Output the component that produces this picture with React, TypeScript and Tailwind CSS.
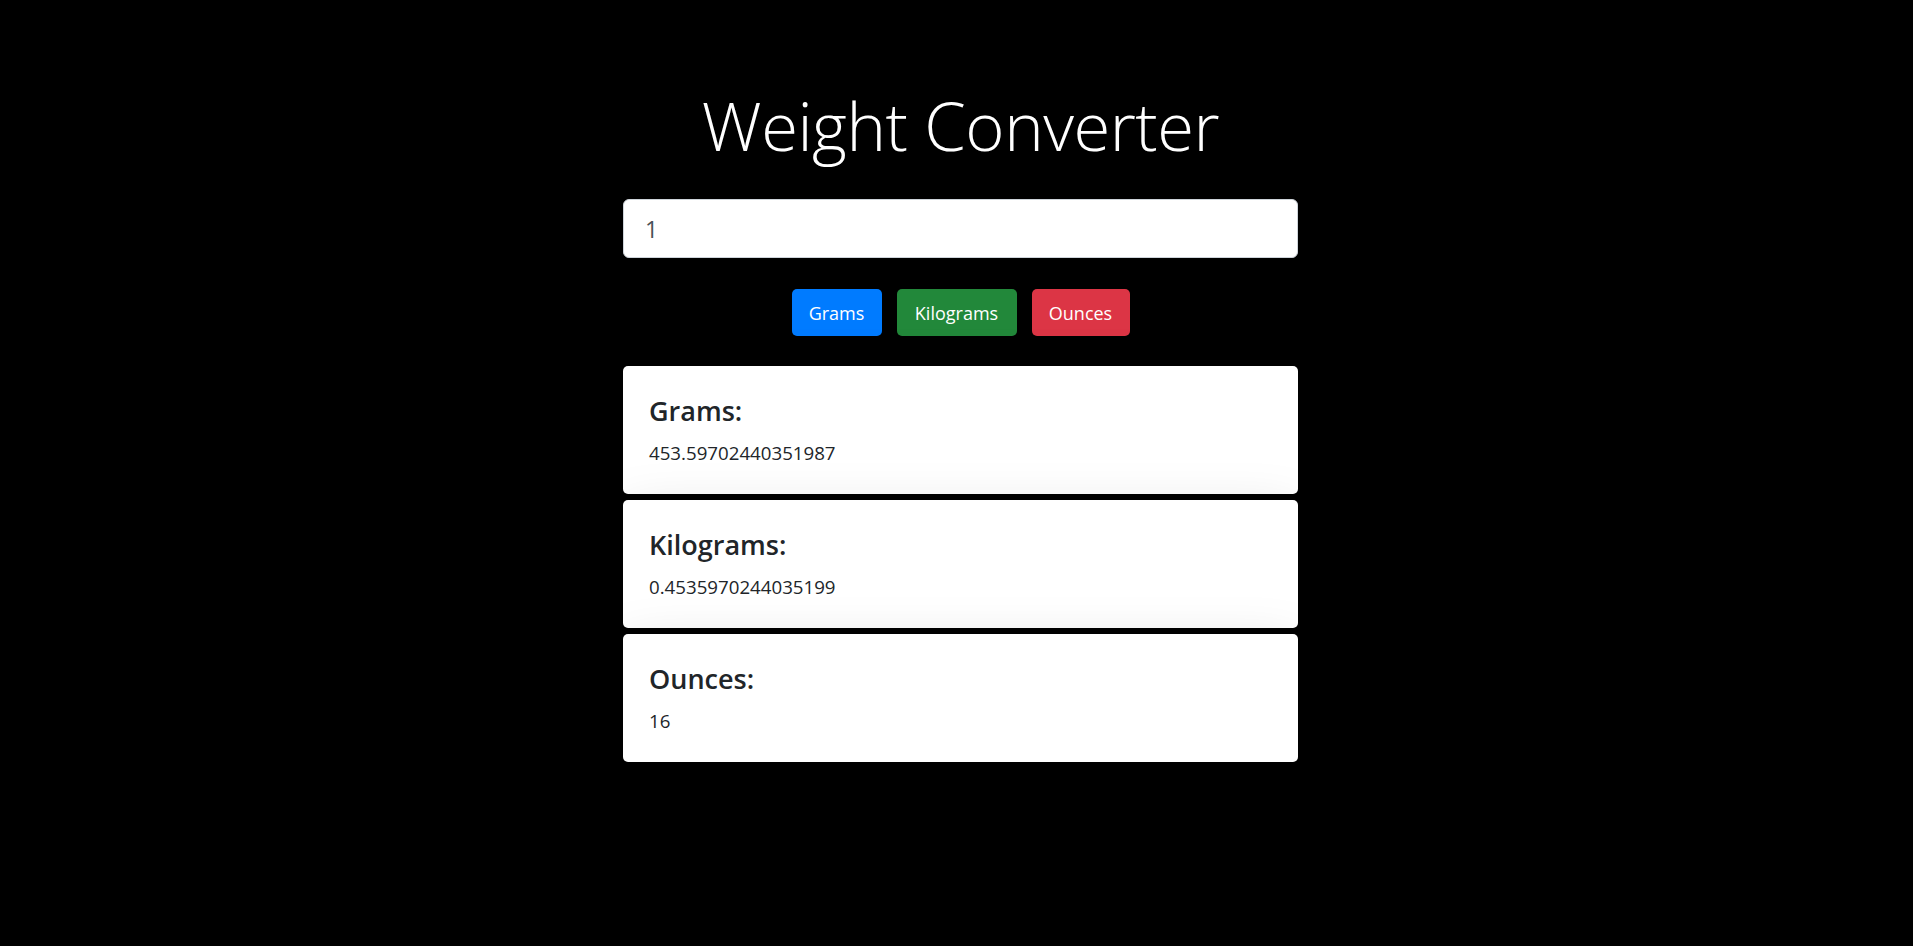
import React, { useState } from 'react';

const Converter: React.FC = () => {
  const [value, setValue] = useState('1');

  // input is in pounds
  const pounds = parseFloat(value) || 0;

  const results = [
    { label: 'Grams:', value: pounds * 453.59702440351987 },
    { label: 'Kilograms:', value: pounds * 0.4535970244035199 },
    { label: 'Ounces:', value: pounds * 16 },
  ];

  return (
    <div className="min-h-screen bg-black flex flex-col items-center pt-[92px] pl-[8px]" style={{ fontFamily: '"Open Sans", "Noto Sans", sans-serif' }}>
      {/* Title */}
      <h1 className="text-white text-[67px] leading-[67px] font-light tracking-[-0.5px]">Weight Converter</h1>

      {/* Input */}
      <input
        type="text"
        value={value}
        onChange={(e) => setValue(e.target.value)}
        className="mt-[40px] w-[675px] h-[59px] bg-white border border-[#ced4da] rounded-[6px] pl-[21px] text-[23px] text-[#495057] outline-none"
      />

      {/* Unit buttons */}
      <div className="mt-[31px] flex gap-[15px]">
        <UnitButton label="Grams" className="w-[90px] bg-[#007bff]" />
        <UnitButton label="Kilograms" className="w-[120px] bg-[#22883a]" />
        <UnitButton label="Ounces" className="w-[98px] bg-[#dc3545]" />
      </div>

      {/* Results */}
      <div className="mt-[30px] flex flex-col gap-[6px]">
        {results.map((r) => (
          <ResultCard key={r.label} title={r.label} value={String(r.value)} />
        ))}
      </div>
    </div>
  );
};

const UnitButton: React.FC<{ label: string; className: string }> = ({ label, className }) => (
  <button className={`h-[47px] rounded-[5px] text-white text-[18px] leading-none text-center ${className}`}>
    {label}
  </button>
);

const ResultCard: React.FC<{ title: string; value: string }> = ({ title, value }) => (
  <div className="w-[675px] h-[128px] bg-white rounded-[5px] pl-[26px] pt-[31px] shadow-[0_19px_58px_rgba(0,0,0,0.175)]">
    <h4 className="text-[27px] leading-[27px] font-semibold text-[#212529]">{title}</h4>
    <p className="mt-[20px] text-[18.7px] leading-[18.7px] text-[#212529]">{value}</p>
  </div>
);

export default function App() {
  return <Converter />;
}
